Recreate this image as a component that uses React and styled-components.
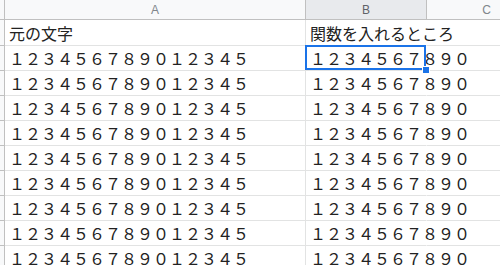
import React from "react";
import styled, { createGlobalStyle } from "styled-components";

const GlobalStyle = createGlobalStyle`
  html, body {
    margin: 0;
    padding: 0;
    background: #fff;
    overflow: hidden;
  }
`;

const digits = "１２３４５６７８９０１２３４５";
const shortDigits = "１２３４５６７８９０";
const rowCount = 9;

function App() {
  const rows = Array.from({ length: rowCount });

  return (
    <>
      <GlobalStyle />
      <Viewport>
        <Sheet>
          <Corner />
          <ColHeader>A</ColHeader>
          <ColHeader $active>B</ColHeader>
          <ColHeader>C</ColHeader>

          <RowHead $tall />
          <Cell $tall>元の文字</Cell>
          <Cell $tall $spill>関数を入れるところ</Cell>
          <Cell $tall />

          {rows.map((_, i) => (
            <React.Fragment key={i}>
              <RowHead />
              <Cell>{digits}</Cell>
              <Cell $spill $selected={i === 0}>
                {shortDigits}
                {i === 0 && <Handle />}
              </Cell>
              <Cell />
            </React.Fragment>
          ))}
        </Sheet>
      </Viewport>
    </>
  );
}

const Viewport = styled.div`
  width: 500px;
  height: 265px;
  overflow: hidden;
`;

const Sheet = styled.div`
  display: grid;
  grid-template-columns: 5px 301px 121px 120px;
  width: 547px;
  font-family: "Noto Sans CJK JP", "Noto Sans", sans-serif;
`;

const Corner = styled.div`
  height: 20px;
  box-sizing: border-box;
  background: #f8f9fa;
  border-right: 1px solid #c0c0c0;
  border-bottom: 1px solid #c0c0c0;
`;

const ColHeader = styled.div`
  height: 20px;
  box-sizing: border-box;
  display: flex;
  align-items: center;
  justify-content: center;
  background: ${p => (p.$active ? "#e8eaed" : "#f8f9fa")};
  color: ${p => (p.$active ? "#5f6368" : "#80868b")};
  border-right: 1px solid #c0c0c0;
  border-bottom: 1px solid #c0c0c0;
  font-family: "Liberation Sans", Arial, sans-serif;
  font-size: 12px;
`;

const RowHead = styled.div`
  height: ${p => (p.$tall ? "26px" : "25px")};
  box-sizing: border-box;
  background: #f8f9fa;
  border-right: 1px solid #c0c0c0;
  border-bottom: 1px solid #c0c0c0;
`;

const Cell = styled.div`
  position: relative;
  height: ${p => (p.$tall ? "26px" : "25px")};
  box-sizing: border-box;
  padding: 0 0 0 4px;
  display: flex;
  align-items: center;
  white-space: nowrap;
  overflow: visible;
  border-right: 1px solid ${p => (p.$spill ? "transparent" : "#e2e3e3")};
  border-bottom: 1px solid #e2e3e3;
  color: #222;
  font-size: 16px;
  line-height: 1;

  ${p =>
    p.$selected &&
    `
    &::after {
      content: "";
      position: absolute;
      top: -1px;
      left: -1px;
      right: 0;
      bottom: 0;
      border: 2px solid #1a73e8;
      z-index: 2;
    }
  `}
`;

const Handle = styled.span`
  position: absolute;
  right: -4px;
  bottom: -4px;
  width: 6px;
  height: 6px;
  background: #1a73e8;
  border: 1px solid #fff;
  z-index: 3;
`;

export default App;
